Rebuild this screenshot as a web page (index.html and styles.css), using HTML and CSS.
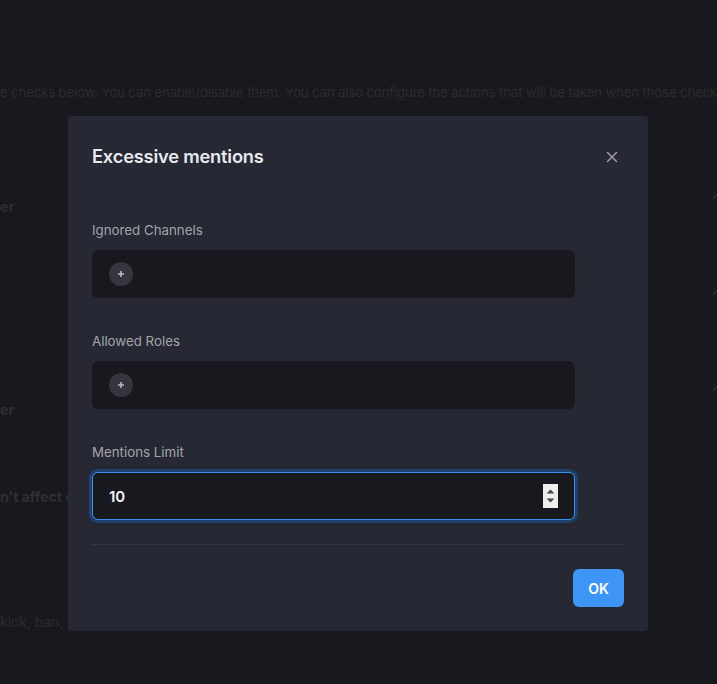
FILE: index.html
```html
<!DOCTYPE html>
<html>
<head>
<meta charset="utf-8">
<link rel="stylesheet" href="styles.css">
</head>
<body>
<div class="page">
  <p class="intro">e checks below. You can enable/disable them. You can also configure the actions that will be taken when those check</p>
  <div class="cols">
    <div class="left">
      <div class="row r1"><span class="bold">er</span></div>
      <div class="row r3"><span class="bold">er</span></div>
      <div class="row r4"><span class="bold">n't affect c</span></div>
      <div class="row r5"><span class="light">kick, ban, te</span></div>
    </div>
    <div class="right">
      <span class="chev c1"></span>
      <span class="chev c2"></span>
      <span class="chev c3"></span>
    </div>
  </div>
</div>
<div class="overlay">
  <div class="modal">
    <div class="modal-head">
      <h2 class="title">Excessive mentions</h2>
      <button class="close" aria-label="Close">
        <svg width="12" height="12" viewBox="0 0 12 12"><path d="M1.5 1.5L10.5 10.5M10.5 1.5L1.5 10.5" stroke="#9b9ca5" stroke-width="1.5" stroke-linecap="round"/></svg>
      </button>
    </div>
    <div class="modal-body">
      <div class="field">
        <label class="label">Ignored Channels</label>
        <div class="box"><span class="add"><svg width="8" height="8" viewBox="0 0 8 8"><path d="M4 1v6M1 4h6" stroke="#b9bac0" stroke-width="1.6"/></svg></span></div>
      </div>
      <div class="field">
        <label class="label">Allowed Roles</label>
        <div class="box"><span class="add"><svg width="8" height="8" viewBox="0 0 8 8"><path d="M4 1v6M1 4h6" stroke="#b9bac0" stroke-width="1.6"/></svg></span></div>
      </div>
      <div class="field">
        <label class="label">Mentions Limit</label>
        <div class="box focus"><span class="value">10</span>
          <span class="spin"><svg width="15" height="24" viewBox="0 0 15 24"><rect width="15" height="24" fill="#eeeeee"/><path d="M3.5 9.5L7.5 5.5L11.5 9.5Z" fill="#4a4a4a"/><path d="M3.5 14.5L7.5 18.5L11.5 14.5Z" fill="#4a4a4a"/></svg></span>
        </div>
      </div>
    </div>
    <div class="modal-foot">
      <button class="ok">OK</button>
    </div>
  </div>
</div>
</body>
</html>
```
FILE: styles.css
```css
* { box-sizing: border-box; }
html, body { margin: 0; padding: 0; }
body {
  width: 717px;
  height: 684px;
  background: #18191e;
  font-family: Inter, "Noto Sans", sans-serif;
  position: relative;
  overflow: hidden;
}
.page {
  color: #2a2b31;
  width: 717px;
}
.intro {
  margin: 0;
  padding-top: 83px;
  white-space: nowrap;
  font-size: 13.2px;
  letter-spacing: -0.14px;
  line-height: 18px;
  overflow: hidden;
}
.cols { display: flex; justify-content: space-between; }
.left { display: flex; flex-direction: column; }
.right { display: flex; flex-direction: column; align-items: flex-end; }
.row { height: 20px; display: flex; align-items: center; white-space: nowrap; }
.bold { font-weight: 700; font-size: 14.5px; color: #2d2e35; letter-spacing: -0.2px; }
.light { font-size: 14px; color: #2a2b31; }
.r1 { margin-top: 95px; }
.r3 { margin-top: 183px; }
.r4 { margin-top: 67px; }
.r5 { margin-top: 105px; }
.chev {
  display: block;
  width: 6px;
  height: 6px;
  border-left: 1px solid #3a3b42;
  border-top: 1px solid #3a3b42;
  transform: rotate(45deg);
  margin-right: -3px;
}
.c1 { margin-top: 94px; }
.c2 { margin-top: 90px; }
.c3 { margin-top: 90px; }

.overlay {
  position: absolute;
  inset: 0;
}
.modal {
  position: absolute;
  left: 68px;
  top: 116px;
  width: 580px;
  background: #262834;
  border-radius: 4px;
  padding: 0 24px;
}
.modal-head {
  display: flex;
  align-items: center;
  justify-content: space-between;
  padding-top: 25px;
}
.title {
  margin: 0;
  font-size: 18.3px;
  font-weight: 600;
  line-height: 31px;
  color: #e8e9ee;
  letter-spacing: -0.2px;
}
.close {
  background: none;
  border: 0;
  padding: 0;
  width: 12px;
  height: 12px;
  margin-right: 6px;
  display: flex;
}
.modal-body {
  padding-top: 48px;
  padding-bottom: 24px;
  display: flex;
  flex-direction: column;
  gap: 33px;
  border-bottom: 1px solid #343641;
}
.field { display: flex; flex-direction: column; gap: 10px; width: 483px; }
.label {
  font-size: 13.3px;
  line-height: 20px;
  color: #a3a4ab;
}
.box {
  height: 48px;
  background: #18191e;
  border-radius: 6px;
  display: flex;
  align-items: center;
  padding: 0 17px;
}
.add {
  width: 24px;
  height: 24px;
  border-radius: 50%;
  background: #35363d;
  display: flex;
  align-items: center;
  justify-content: center;
}
.focus {
  border: 1px solid #3d8ff0;
  box-shadow: 0 0 0 3px #20406e;
  padding-left: 16px;
  padding-right: 16px;
  justify-content: space-between;
}
.value {
  font-size: 15px;
  font-weight: 600;
  color: #f2f3f5;
}
.spin { display: flex; }
.modal-foot {
  display: flex;
  justify-content: flex-end;
  padding: 24px 0;
}
.ok {
  width: 51px;
  height: 38px;
  border: 0;
  border-radius: 6px;
  background: #3d96f6;
  color: #fff;
  font-family: inherit;
  font-size: 14px;
  font-weight: 600;
}
```
